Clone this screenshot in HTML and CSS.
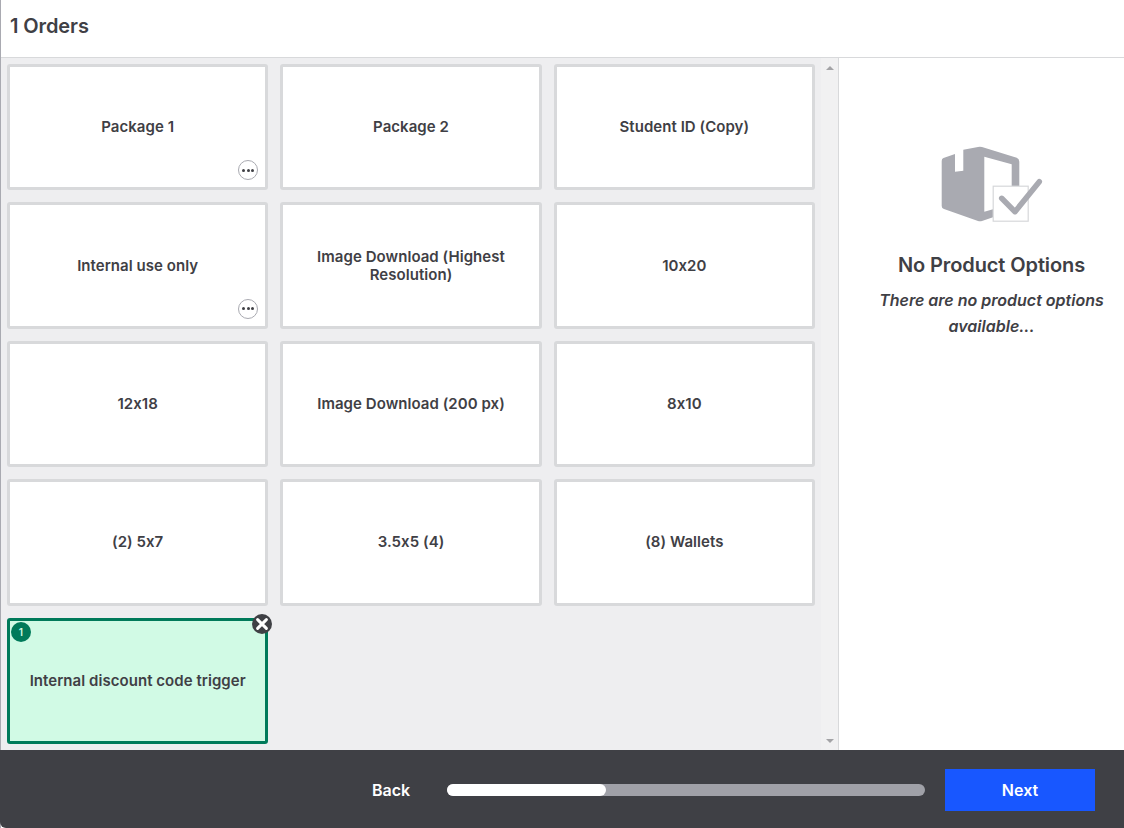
FILE: index.html
```html
<!DOCTYPE html>
<html lang="en">
<head>
<meta charset="utf-8">
<title>Orders</title>
<link rel="stylesheet" href="styles.css">
</head>
<body>
<div class="app">
  <header class="header"><h1 class="title">1 Orders</h1></header>
  <main class="main">
    <section class="products">
      <div class="grid">
        <div class="card"><span>Package 1</span><span class="more"><i></i><i></i><i></i></span></div>
        <div class="card"><span>Package 2</span></div>
        <div class="card"><span>Student ID (Copy)</span></div>
        <div class="card"><span>Internal use only</span><span class="more"><i></i><i></i><i></i></span></div>
        <div class="card"><span>Image Download (Highest Resolution)</span></div>
        <div class="card"><span>10x20</span></div>
        <div class="card"><span>12x18</span></div>
        <div class="card"><span>Image Download (200 px)</span></div>
        <div class="card"><span>8x10</span></div>
        <div class="card"><span>(2) 5x7</span></div>
        <div class="card"><span>3.5x5 (4)</span></div>
        <div class="card"><span>(8) Wallets</span></div>
        <div class="card selected">
          <span class="count">1</span>
          <span>Internal discount code trigger</span>
          <span class="remove">
            <svg viewBox="0 0 20 20" width="20" height="20"><path d="M5.600 5.600 14.400 14.400M14.400 5.600 5.600 14.400" stroke="#fff" stroke-width="3" stroke-linecap="round" fill="none"/></svg>
          </span>
        </div>
      </div>
      <div class="scrollbar">
        <span class="arrow up"></span>
        <span class="arrow down"></span>
      </div>
    </section>
    <aside class="options">
      <svg class="options-icon" viewBox="0 0 102 78" width="102" height="78">
        <path fill="#a9aab1" d="M2.500 12 14 8V25.700L22.300 24.700V3.700L37 .9Q39 .4 41 1L75.700 11.700Q78.300 12.700 78.300 15.700V40H70.700V18.300L43.300 10.700V65.700L52 63.300V71.300L41 75Q39 75.700 37 75L3 63Q.7 62.300 .7 60V15Q.7 12.700 2.500 12Z"/>
        <rect x="52.200" y="40.200" width="35" height="35" fill="#fff" stroke="#d6d7da" stroke-width="1.200"/>
        <path d="M60.700 52.300 74 65.700 98.300 35.700" fill="none" stroke="#a9aab1" stroke-width="5.500" stroke-linecap="round" stroke-linejoin="round"/>
      </svg>
      <h2 class="options-title">No Product Options</h2>
      <p class="options-text">There are no product options available...</p>
    </aside>
  </main>
  <footer class="footer">
    <button class="back" type="button">Back</button>
    <div class="progress"><div class="progress-fill"></div></div>
    <button class="next" type="button">Next</button>
  </footer>
</div>
</body>
</html>
```
FILE: styles.css
```css
* { box-sizing: border-box; }
html, body { margin: 0; height: 100%; }
body { font-family: Inter, "Liberation Sans", sans-serif; font-feature-settings: "calt" 0; color: #3f4045; background: #fff; overflow: hidden; }
.app { display: flex; flex-direction: column; width: 1124px; height: 828px; border-left: 1px solid #a9aab1; }
.header { height: 58px; flex: none; display: flex; align-items: center; padding: 0 9px 5px; border-bottom: 1px solid #d8d9db; background: #fff; }
.title { margin: 0; font-size: 20px; font-weight: 600; line-height: 24px; letter-spacing: -0.1px; }
.main { flex: 1; display: flex; min-height: 0; }
.products { width: 838px; flex: none; display: flex; background: #eeeef0; border-right: 1px solid #d8d9db; }
.grid { width: 820px; flex: none; padding: 5.900px 6px 0; display: grid; grid-template-columns: repeat(3, 1fr); grid-auto-rows: 126.450px; gap: 12px; align-content: start; }
.card { position: relative; display: flex; align-items: center; justify-content: center; padding: 0 16px; border: 3px solid #d8d9db; border-radius: 3px; background: #fff; font-size: 15px; font-weight: 600; line-height: 18px; letter-spacing: 0.05px; text-align: center; }
.more { position: absolute; right: 7px; bottom: 7px; width: 20px; height: 20px; display: flex; align-items: center; justify-content: center; gap: 1.500px; border: 1px solid #a9aab1; border-radius: 50%; background: #fff; }
.more i { width: 3px; height: 3px; border-radius: 50%; background: #3f4045; }
.selected { border-color: #007a5a; background: #d1fae5; }
.count { position: absolute; left: 1px; top: 1px; width: 20px; height: 20px; border-radius: 50%; background: #007a5a; color: #d1fae5; font-size: 10px; line-height: 20px; }
.remove { position: absolute; right: -7px; top: -7px; width: 20px; height: 20px; border-radius: 50%; background: #3f4045; display: flex; }
.scrollbar { flex: 1; display: flex; flex-direction: column; justify-content: space-between; align-items: center; padding: 8px 0 7px; background: #f1f1f2; }
.arrow { width: 0; height: 0; border-left: 4px solid transparent; border-right: 4px solid transparent; }
.up { border-bottom: 4px solid #a3a3a6; }
.down { border-top: 4px solid #a3a3a6; }
.options { flex: 1; display: flex; flex-direction: column; align-items: center; padding: 88px 0 0 20px; text-align: center; background: #fff; }
.options-title { margin: 28px 0 0; font-size: 20px; font-weight: 600; line-height: 26px; letter-spacing: -0.1px; }
.options-text { margin: 9px 0 0; padding: 0 16px; font-size: 16px; font-style: italic; font-weight: 600; line-height: 26px; }
.footer { height: 78px; flex: none; display: flex; align-items: center; background: #3f4045; border-bottom-left-radius: 6px; padding: 2px 0 0 372px; margin-left: -1px; }
.back { width: 38px; padding: 0; border: 0; background: none; color: #fff; font: 600 16px Inter, "Liberation Sans", sans-serif; }
.progress { width: 478px; height: 12px; margin-left: 37px; border-radius: 6px; background: #a0a1a8; }
.progress-fill { width: 159px; height: 12px; border-radius: 6px; background: #fff; }
.next { width: 150px; height: 42px; margin-left: 20px; border: 0; background: #1857ff; color: #fff; font: 600 16px Inter, "Liberation Sans", sans-serif; }
```
